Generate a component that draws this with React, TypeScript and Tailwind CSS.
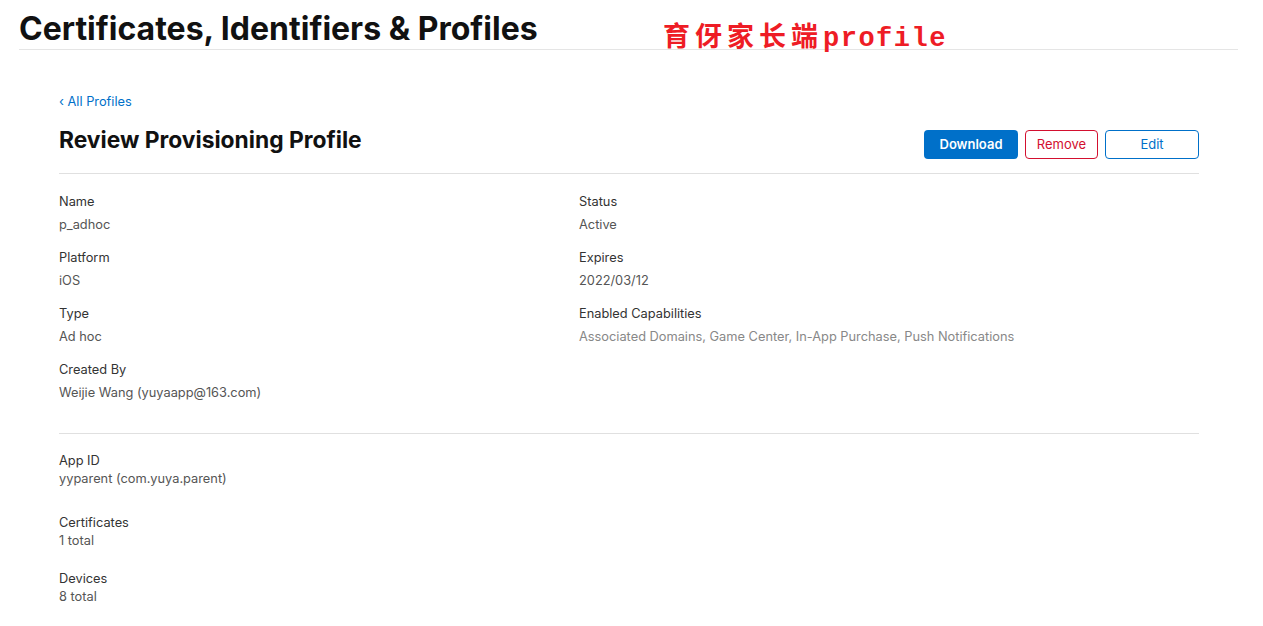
import React from 'react'

const font = { fontFamily: 'Inter, "Noto Sans CJK SC", sans-serif' }

function Field({ label, value, muted }: { label: string; value: string; muted?: boolean }) {
  return (
    <div className="h-[56px]">
      <div className="text-[12.8px] leading-[18px] text-[#333]">{label}</div>
      <div className={`mt-[5px] text-[12.8px] leading-[18px] ${muted ? 'text-[#888]' : 'text-[#555]'}`}>{value}</div>
    </div>
  )
}

function Stat({ label, value, tall }: { label: string; value: string; tall?: boolean }) {
  return (
    <div className={tall ? 'h-[62px]' : 'h-[56px]'}>
      <div className="text-[12.8px] leading-[18px] text-[#333]">{label}</div>
      <div className="text-[12.8px] leading-[18px] text-[#555]">{value}</div>
    </div>
  )
}

export default function App() {
  return (
    <div className="relative min-h-[626px] bg-white" style={font}>
      {/* Page header */}
      <div className="mx-[19px] w-[1219px] border-b border-[#e5e5e5] pt-[11px] pb-[2px]">
        <h1 className="text-[32px] leading-[36px] font-bold text-[#111]">
          Certificates, Identifiers &amp; Profiles
        </h1>
      </div>

      {/* annotation overlay */}
      <div
        className="absolute left-[663px] top-[18px] text-[27px] leading-[34px] font-bold text-[#ee1c25]"
        style={{ fontFamily: '"Noto Sans CJK SC", sans-serif' }}
      >
        <span className="tracking-[5px]">育伢家长端</span>
        <span className="tracking-[1.5px]" style={{ fontFamily: '"Liberation Mono", monospace' }}>
          profile
        </span>
      </div>

      <div className="ml-[59px] w-[1140px] pt-[38px]">
        <a className="text-[12.8px] leading-[16px] text-[#0070c9]" href="#">
          ‹ All Profiles
        </a>

        <div className="mt-[13px] flex items-start justify-between border-b border-[#e0e0e0] pb-[14px]">
          <h2 className="text-[22.8px] leading-[30px] font-bold text-[#111]">Review Provisioning Profile</h2>
          <div className="mt-[5px] flex gap-[7px]">
            <button className="h-[29px] w-[94px] rounded-[4px] bg-[#0070c9] text-[13px] font-semibold text-white">
              Download
            </button>
            <button className="h-[29px] w-[73px] rounded-[4px] border border-[#d30f2f] text-[13px] text-[#d30f2f]">
              Remove
            </button>
            <button className="h-[29px] w-[94px] rounded-[4px] border border-[#0070c9] text-[13px] text-[#0070c9]">
              Edit
            </button>
          </div>
        </div>

        <div className="flex border-b border-[#e0e0e0] pt-[19px] pb-[16px]">
          <div className="w-[520px]">
            <Field label="Name" value="p_adhoc" />
            <Field label="Platform" value="iOS" />
            <Field label="Type" value="Ad hoc" />
            <Field label="Created By" value="Weijie Wang (yuyaapp@163.com)" />
          </div>
          <div>
            <Field label="Status" value="Active" />
            <Field label="Expires" value="2022/03/12" />
            <Field label="Enabled Capabilities" value="Associated Domains, Game Center, In-App Purchase, Push Notifications" muted />
          </div>
        </div>

        <div className="pt-[18px]">
          <Stat label="App ID" value="yyparent (com.yuya.parent)" tall />
          <Stat label="Certificates" value="1 total" />
          <Stat label="Devices" value="8 total" />
        </div>
      </div>
    </div>
  )
}
